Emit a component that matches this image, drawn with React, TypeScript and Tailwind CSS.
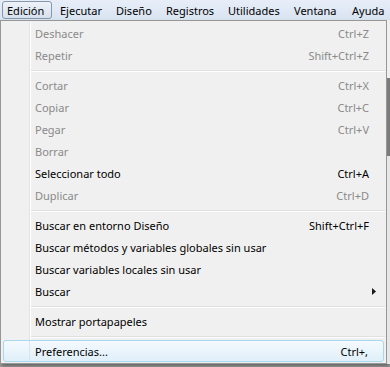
import React from 'react'

type Item =
  | { kind: 'sep' }
  | { kind: 'item'; label: string; shortcut?: string; disabled?: boolean; submenu?: boolean; active?: boolean }

const items: Item[] = [
  { kind: 'item', label: 'Deshacer', shortcut: 'Ctrl+Z', disabled: true },
  { kind: 'item', label: 'Repetir', shortcut: 'Shift+Ctrl+Z', disabled: true },
  { kind: 'sep' },
  { kind: 'item', label: 'Cortar', shortcut: 'Ctrl+X', disabled: true },
  { kind: 'item', label: 'Copiar', shortcut: 'Ctrl+C', disabled: true },
  { kind: 'item', label: 'Pegar', shortcut: 'Ctrl+V', disabled: true },
  { kind: 'item', label: 'Borrar', disabled: true },
  { kind: 'item', label: 'Seleccionar todo', shortcut: 'Ctrl+A' },
  { kind: 'item', label: 'Duplicar', shortcut: 'Ctrl+D', disabled: true },
  { kind: 'sep' },
  { kind: 'item', label: 'Buscar en entorno Diseño', shortcut: 'Shift+Ctrl+F' },
  { kind: 'item', label: 'Buscar métodos y variables globales sin usar' },
  { kind: 'item', label: 'Buscar variables locales sin usar' },
  { kind: 'item', label: 'Buscar', submenu: true },
  { kind: 'sep' },
  { kind: 'item', label: 'Mostrar portapapeles' },
  { kind: 'sep' },
  { kind: 'item', label: 'Preferencias...', shortcut: 'Ctrl+,', active: true },
]

const menus = [
  { label: 'Ejecutar', w: 'w-[56px]' },
  { label: 'Diseño', w: 'w-[50px]' },
  { label: 'Registros', w: 'w-[62px]' },
  { label: 'Utilidades', w: 'w-[66px]' },
  { label: 'Ventana', w: 'w-[58px]' },
  { label: 'Ayuda', w: 'w-[43px]' },
]

const App = () => {
  return (
    <div className="w-[390px] h-[367px] overflow-hidden bg-[#9a9a9a] text-[11px] text-black font-['Noto_Sans',sans-serif]">
      {/* menu bar */}
      <div className="h-[20px] flex items-center pl-[2px] bg-gradient-to-b from-[#e7eef8] to-[#d9e4f1]">
        <div className="w-[50px] h-[18px] mr-[3px] flex items-center pl-[4px] rounded-[3px] border border-[#8797ad] bg-gradient-to-b from-[#eef3f9] to-[#d6e0ed] leading-none">
          Edición
        </div>
        {menus.map(m => (
          <div key={m.label} className={`${m.w} h-[18px] flex items-center pl-[5px] leading-none`}>
            {m.label}
          </div>
        ))}
      </div>

      <div className="flex">
        {/* dropdown */}
        <div className="w-[387px] h-[344px] border border-[#979797] bg-[#f0f0f0] pt-[1px] shadow-[2px_2px_3px_rgba(0,0,0,0.35)]">
          {items.map((it, i) =>
            it.kind === 'sep' ? (
              <div key={i} className="h-[8px] flex">
                <div className="w-[29px] border-r border-[#e2e3e3]" />
                <div className="w-px bg-white" />
                <div className="flex-1 pt-[4px] pr-[1px]">
                  <div className="h-px bg-[#e0e0e0]" />
                  <div className="h-px bg-white" />
                </div>
              </div>
            ) : it.active ? (
              <div key={i} className="h-[22px] mx-[2px] flex items-center rounded-[3px] border border-[#a8d8ee] bg-gradient-to-b from-[#f4fafe] to-[#e0eff9]">
                <div className="w-[26px] h-full border-r border-[#d5e6f0]" />
                <div className="flex-1 pl-[5px] leading-none">{it.label}</div>
                <div className="pr-[15px] leading-none">{it.shortcut}</div>
              </div>
            ) : (
              <div key={i} className={`h-[22px] flex items-center ${it.disabled ? 'text-[#8a8a8a]' : 'text-black'}`}>
                <div className="w-[29px] h-full border-r border-[#e2e3e3]" />
                <div className="w-px h-full bg-white" />
                <div className="flex-1 pl-[4px] leading-none">{it.label}</div>
                {it.shortcut && <div className="pr-[17px] leading-none">{it.shortcut}</div>}
                {it.submenu && (
                  <svg className="mr-[10px]" width="4" height="7" viewBox="0 0 4 7">
                    <path d="M0 0 L4 3.5 L0 7 Z" fill="#1a1a1a" />
                  </svg>
                )}
              </div>
            )
          )}
        </div>
        <div className="flex-1 flex flex-col">
          <div className="h-[58px] bg-[#f0f0f0]" />
          <div className="h-[78px] bg-[#7c7c7c]" />
          <div className="flex-1 bg-[#e6e6e6]" />
        </div>
      </div>
    </div>
  )
}

export default App
